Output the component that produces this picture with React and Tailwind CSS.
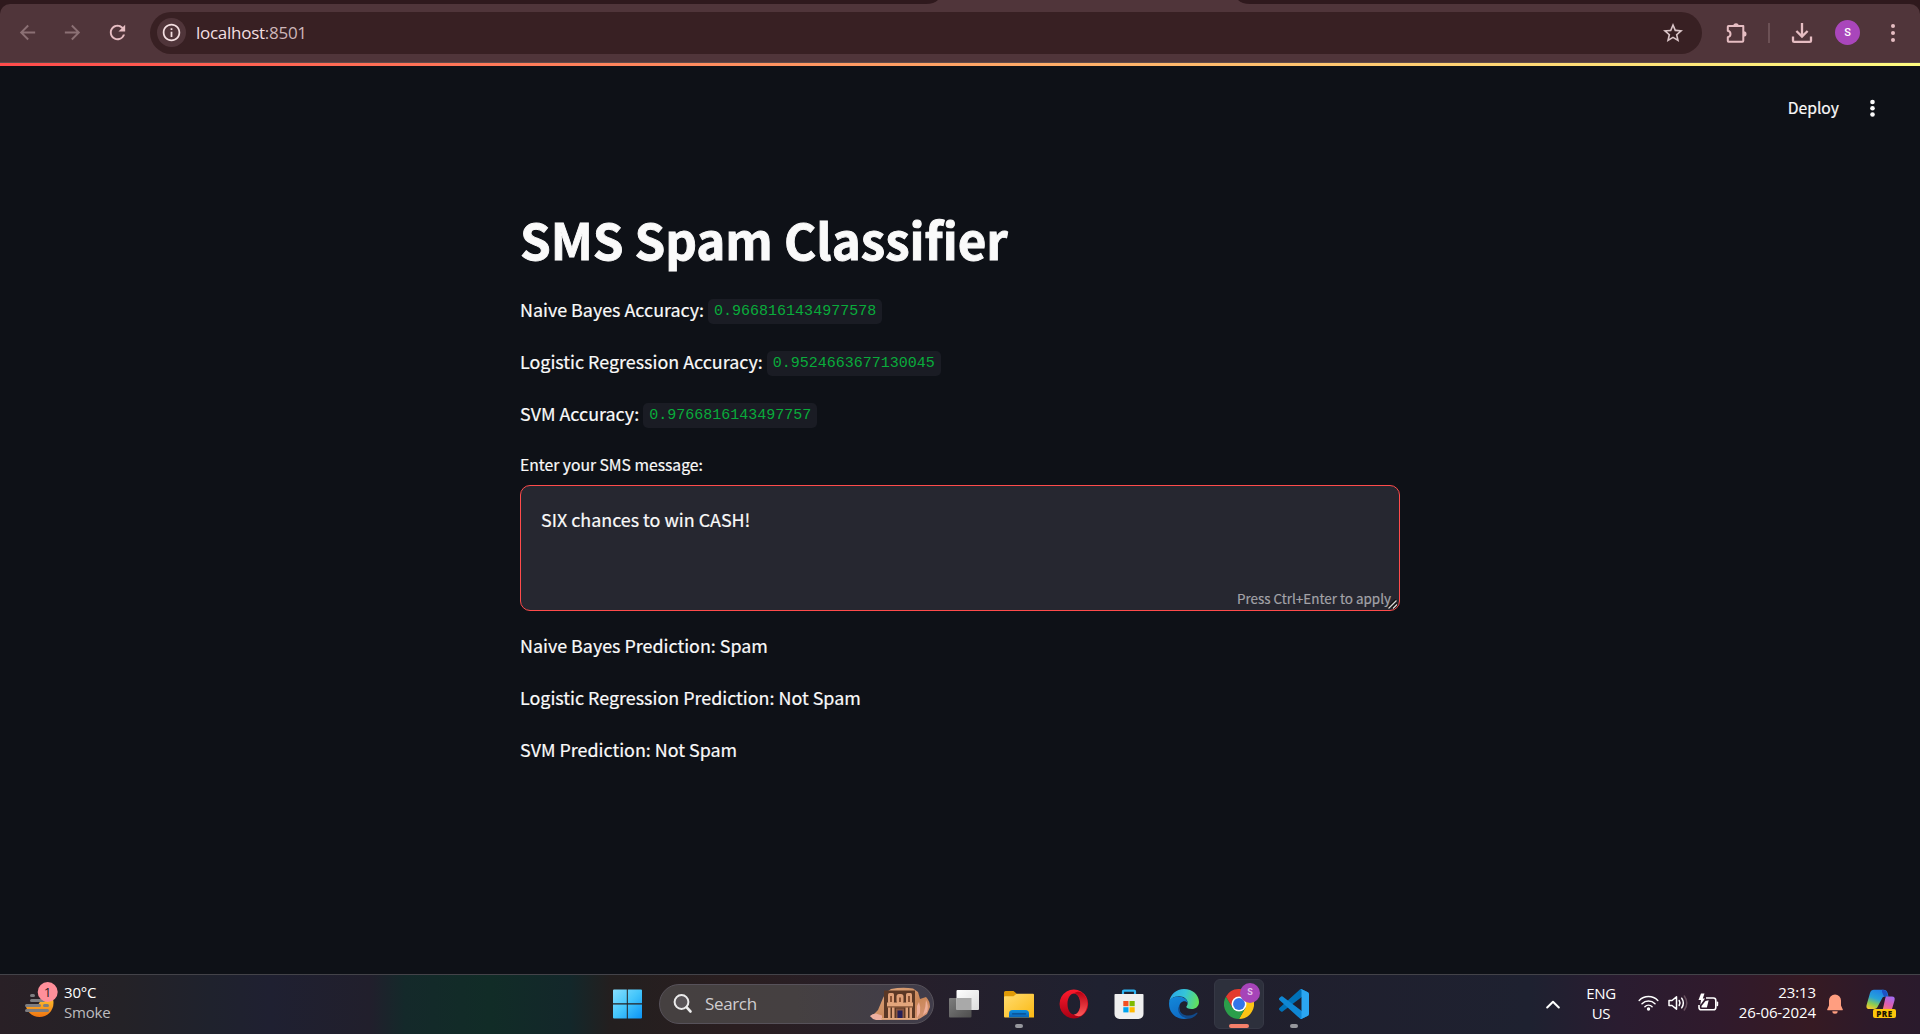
import { MdArrowBack, MdArrowForward, MdRefresh, MdStarBorder, MdInfoOutline } from "react-icons/md";

const accuracies = [
  { label: "Naive Bayes Accuracy:", value: "0.9668161434977578" },
  { label: "Logistic Regression Accuracy:", value: "0.9524663677130045" },
  { label: "SVM Accuracy:", value: "0.9766816143497757" },
];

const predictions = [
  "Naive Bayes Prediction: Spam",
  "Logistic Regression Prediction: Not Spam",
  "SVM Prediction: Not Spam",
];

function ExtensionIcon() {
  return (
    <svg width="22" height="22" viewBox="0 0 22 22" fill="none">
      <path
        d="M2.5 4h14.8v14.8a1 1 0 0 1-1 1H2.5a.7.7 0 0 1-.7-.7v-3.9c1.7-.4 2.7-1.6 2.7-3.2s-1-2.8-2.7-3.2V4.7a.7.7 0 0 1 .7-.7z"
        stroke="#e6bdc2"
        strokeWidth="2"
        strokeLinejoin="round"
      />
      <path d="M7.3 4a2.7 2.7 0 0 1 5.4 0zM17.8 9.2a2.7 2.7 0 0 1 0 5.4z" fill="#e6bdc2" />
    </svg>
  );
}

function DownloadIcon() {
  return (
    <svg width="22" height="22" viewBox="0 0 22 22" fill="none" stroke="#e6bdc2" strokeWidth="2.3">
      <path d="M11 1v13M5.4 9l5.6 5.6L16.6 9" />
      <path d="M2 14.5v4.2a1.2 1.2 0 0 0 1.2 1.2h15.6a1.2 1.2 0 0 0 1.2-1.2v-4.2" />
    </svg>
  );
}

function BrowserBar() {
  return (
    <div>
      <div className="flex h-1 bg-[#2f191d] pl-[926px]">
        <svg className="shrink-0" width="324" height="4" viewBox="0 0 324 4">
          <path d="M12 0Q8 4 0 4H324Q316 4 312 0z" fill="#50353a" />
        </svg>
      </div>
      <div className="bg-[#2f191d]">
        <div className="flex h-[58px] items-center rounded-t-[10px] bg-[#50353a] pb-px">
          <div className="flex w-[150px] shrink-0 items-center gap-[22px] pl-[16px]">
            <MdArrowBack size={23} color="#8b7074" />
            <MdArrowForward size={23} color="#8b7074" />
            <MdRefresh size={23} color="#e6bdc2" />
          </div>
          <div className="flex h-[42px] w-[1552px] shrink-0 items-center rounded-full bg-[#382023] pr-[17px] pl-[7px]">
            <div className="flex h-[29px] w-[29px] items-center justify-center rounded-full bg-[#50353a]">
              <MdInfoOutline size={21} color="#f3dfe1" />
            </div>
            <span className="mt-px ml-[10px] font-['Open_Sans',sans-serif] text-[17px] leading-6 tracking-[-0.27px] text-[#f3dfe1]">
              localhost<span className="text-[#cdb6b9]">:8501</span>
            </span>
            <MdStarBorder size={24} color="#dac5c8" className="mt-px ml-auto" />
          </div>
          <div className="ml-[24px] flex flex-1 items-center">
            <ExtensionIcon />
            <div className="ml-[20px] h-[20px] w-[2px] bg-[#6c5155]" />
            <div className="ml-[21px]">
              <DownloadIcon />
            </div>
            <div className="ml-[22px] flex h-[25px] w-[25px] items-center justify-center rounded-full bg-[#a946bb] pt-px font-[Roboto,sans-serif] text-[11px] font-medium text-white">
              S
            </div>
            <svg className="ml-[30px]" width="6" height="20" viewBox="0 0 6 20" fill="#e6bdc2">
              <circle cx="3" cy="3" r="2" />
              <circle cx="3" cy="10" r="2" />
              <circle cx="3" cy="17" r="2" />
            </svg>
          </div>
        </div>
      </div>
      <div className="h-px bg-[#5c4b4c]" />
    </div>
  );
}

function Page() {
  return (
    <main className="flex-1 bg-[#0e1117] font-['Noto_Sans_CJK_SC',sans-serif] text-[17.9px] text-[#fafafa] [-webkit-text-stroke:0.2px]">
      <div className="h-[3px] bg-[linear-gradient(90deg,#ff4b4b,#fffd80)]" />
      <header className="flex h-[82px] items-center justify-end pt-[2px] pr-[43px]">
        <span className="text-[15.7px] leading-6">Deploy</span>
        <svg className="ml-[30px]" width="8" height="20" viewBox="0 0 8 20" fill="#fafafa">
          <circle cx="3.500" cy="4" r="2.300" />
          <circle cx="3.500" cy="10.300" r="2.300" />
          <circle cx="3.500" cy="16.500" r="2.300" />
        </svg>
      </header>
      <div className="mx-auto flex w-[880px] flex-col pt-[58px]">
        <h1 className="text-[49.3px] leading-[66px] font-bold tracking-[-0.05px] [-webkit-text-stroke:0.9px]">
          SMS Spam Classifier
        </h1>
        <div className="mt-[21px] flex flex-col gap-5">
          {accuracies.map((a) => (
            <p key={a.label} className="flex h-8 items-center gap-[4px] whitespace-nowrap">
              <span className="leading-8">{a.label}</span>
              <code className="mt-[5px] h-[25px] rounded-[5px] bg-[#1a1c24] px-[6px] font-['Liberation_Mono',monospace] text-[15px] leading-[26px] text-[#09ab3b] [-webkit-text-stroke:0px]">
                {a.value}
              </code>
            </p>
          ))}
        </div>
        <label className="mt-[24px] text-[15.7px] leading-6">Enter your SMS message:</label>
        <div className="relative mt-[8px] h-[126px] rounded-[10px] border border-[#ff4b4b] bg-[#262730] px-5 pt-[17px]">
          <p className="leading-8">SIX chances to win CASH!</p>
          <span className="absolute right-[8px] bottom-[2px] text-[13.45px] leading-5 text-[#a3a3a8]">
            Press Ctrl+Enter to apply
          </span>
          <svg className="absolute right-[1px] bottom-[1px]" width="10" height="10" viewBox="0 0 10 10">
            <path d="M0 9.5L8.500 1M4.500 9.500L9 5" stroke="#111" strokeWidth="3.400" />
            <path d="M.5 9.500L8.500 1.500M5 9.500L9 5.500" stroke="#d8d8d8" strokeWidth="1.300" />
          </svg>
        </div>
        <div className="mt-[18px] flex flex-col gap-5">
          {predictions.map((p) => (
            <p key={p} className="leading-8">
              {p}
            </p>
          ))}
        </div>
      </div>
    </main>
  );
}

function WeatherIcon() {
  return (
    <svg className="mb-[9px]" width="36" height="40" viewBox="0 0 36 40">
      <defs>
        <linearGradient id="sun" x1="0" y1="0" x2="0" y2="1">
          <stop offset="0.3" stopColor="#ffc531" />
          <stop offset="1" stopColor="#ef7310" />
        </linearGradient>
        <clipPath id="sunclip">
          <path d="M0 26q10 2 14-1l3-5h14v20H0z" />
        </clipPath>
      </defs>
      <circle cx="15.500" cy="23" r="14" fill="url(#sun)" clipPath="url(#sunclip)" />
      <g stroke="#7d7d80" strokeWidth="3" strokeLinecap="round">
        <path d="M7.500 15.500h2M7.500 20.500h12M2.500 25.500h13M20.500 25.500h3M2.500 30.500h21" />
      </g>
      <circle cx="23.700" cy="12" r="10" fill="#ff8f9a" />
      <text x="23.700" y="17" textAnchor="middle" fontFamily="Open Sans" fontSize="13.500" fill="#2a1a1e">1</text>
    </svg>
  );
}

function WindowsIcon() {
  return (
    <svg width="30" height="30" viewBox="0 0 30 30">
      <defs>
        <linearGradient id="win" x1="0" y1="0" x2="30" y2="30" gradientUnits="userSpaceOnUse">
          <stop offset="0" stopColor="#8be0ff" />
          <stop offset=".5" stopColor="#45c6fb" />
          <stop offset="1" stopColor="#0a93f5" />
        </linearGradient>
      </defs>
      <path d="M2 .5H14.800V14.300H1V1.500a1 1 0 0 1 1-1zM15.800.5h13.200a1 1 0 0 1 1 1V14.300h-14.200zM1 15.500h13.800v14H2a1 1 0 0 1-1-1zM15.800 15.500H30v13a1 1 0 0 1-1 1H15.800z" fill="url(#win)" />
    </svg>
  );
}

function PetraIcon() {
  return (
    <svg width="60" height="34" viewBox="0 0 60 34">
      <defs>
        <linearGradient id="rock" x1="0" y1="0" x2="1" y2="1">
          <stop offset="0" stopColor="#e2ab83" />
          <stop offset=".6" stopColor="#c98658" />
          <stop offset="1" stopColor="#d9987a" />
        </linearGradient>
      </defs>
      <path d="M3 28L8 23L13 11L16 5.500L21 2Q32 0 43 1.500L48 5L50 12L56 10Q60 14 60 20L57 27L50 31.500L46 32.500H11z" fill="url(#rock)" />
      <path d="M0 29Q2 26.500 6 26.500L12 28.500V33H6Q2 32 0 29z" fill="#eeb0a0" />
      <rect x="14" y="3.500" width="31" height="28" fill="#5b3825" />
      <rect x="18" y="6" width="6" height="10.500" rx="1.500" fill="#dfa078" />
      <rect x="36" y="6" width="6" height="10.500" rx="1.500" fill="#dfa078" />
      <rect x="26.500" y="7" width="7" height="9.500" rx="2.500" fill="#dfa078" />
      <path d="M20 9h2v6h-2zM38 9h2v6h-2zM29 10.500h2V15h-2z" fill="#8a5233" />
      <path d="M17 15.500h26v4H17z" fill="#e3a67c" />
      <path d="M17 19.500h26v1H17z" fill="#9c6443" />
      <path d="M18 20.500h2.500V31H18zM22 20.500h2.500V31H22zM35.500 20.500H38V31h-2.500zM39.500 20.500H42V31h-2.500z" fill="#e0a17a" />
      <rect x="26" y="21.500" width="8" height="10" fill="#8a563e" />
      <rect x="27.500" y="23.500" width="5" height="8" fill="#262058" />
      <rect x="11" y="31" width="37" height="1.800" fill="#e5aa80" />
      <path d="M49 15Q51 20 50 26L47 31V19zM56 13Q59 19 57 25L53 28Q56 20 56 13z" fill="#eeae98" />
    </svg>
  );
}

function TaskViewIcon() {
  return (
    <svg width="30" height="30" viewBox="0 0 30 30">
      <defs>
        <linearGradient id="tva" x1="0" y1="0" x2="1" y2="1">
          <stop offset="0" stopColor="#fff" />
          <stop offset="1" stopColor="#dcdcdc" />
        </linearGradient>
        <linearGradient id="tvb" x1="0" y1="0" x2="1" y2="1">
          <stop offset="0" stopColor="#7d7d7d" />
          <stop offset="1" stopColor="#4d4d4d" />
        </linearGradient>
      </defs>
      <rect x="0" y="9" width="22.500" height="19.500" rx="1" fill="url(#tvb)" />
      <rect x="7.500" y="1" width="22.500" height="20" rx="1" fill="url(#tva)" />
      <path d="M7.500 9h15v12h-15z" fill="#a9a9a9" />
    </svg>
  );
}

function FolderIcon() {
  return (
    <svg width="30" height="30" viewBox="0 0 30 30">
      <defs>
        <linearGradient id="fold" x1="0" y1="0" x2="1" y2="1">
          <stop offset="0" stopColor="#ffdc70" />
          <stop offset="1" stopColor="#fbb913" />
        </linearGradient>
        <linearGradient id="foldb" x1="0" y1="0" x2="0" y2="1">
          <stop offset="0" stopColor="#0f8fdf" />
          <stop offset="1" stopColor="#0b62b5" />
        </linearGradient>
      </defs>
      <path d="M0 3.500A1.500 1.500 0 0 1 1.500 2H9.500l3 2.600V9H0z" fill="#df9a06" />
      <path d="M0 8q0-.6 1-.7H9.500L12.500 4.700H29a1 1 0 0 1 1 1V28.500H1a1 1 0 0 1-1-1z" fill="url(#fold)" />
      <path d="M5 28.500V24.500a3.500 3.500 0 0 1 3.500-3.500h13a3.500 3.500 0 0 1 3.500 3.500v4z" fill="url(#foldb)" />
      <path d="M8.500 24.800h13" stroke="#0a4b8c" strokeWidth="1.200" strokeLinecap="round" />
    </svg>
  );
}

function OperaIcon() {
  return (
    <svg width="30" height="30" viewBox="0 0 30 30">
      <defs>
        <linearGradient id="opa" x1="0" y1="0" x2="0" y2="1">
          <stop offset="0" stopColor="#ff1b2d" />
          <stop offset="1" stopColor="#a70014" />
        </linearGradient>
        <linearGradient id="opb" x1="0" y1="0" x2="0" y2="1">
          <stop offset="0" stopColor="#b80012" />
          <stop offset="1" stopColor="#ff5a5a" />
        </linearGradient>
      </defs>
      <path fillRule="evenodd" d="M14.800.5a14.300 14.500 0 1 0 .1 0zM15 4.500c3.600 0 6.300 4.600 6.300 10.500S18.600 25.500 15 25.500 8.500 20.900 8.500 15 11.400 4.500 15 4.500z" fill="url(#opa)" />
      <path d="M15 4.500c2-1.700 5-2.300 8-.8a14.300 14.500 0 0 1 0 22.600c-3 1.500-6 .9-8-.8 3.600 0 6.300-4.600 6.300-10.500S18.600 4.500 15 4.500z" fill="url(#opb)" />
    </svg>
  );
}

function StoreIcon() {
  return (
    <svg width="30" height="30" viewBox="0 0 30 30">
      <path d="M9 6V2.600A1 1 0 0 1 10 1.600H20a1 1 0 0 1 1 1V6" fill="none" stroke="#2fb5f4" strokeWidth="2.200" />
      <path d="M.5 5.800a.8.800 0 0 1 .8-.8h27.400a.8.800 0 0 1 .8.800V25a5 5 0 0 1-5 5h-19a5 5 0 0 1-5-5z" fill="#efefef" />
      <path d="M9.300 12h5.200v5.200H9.300z" fill="#f25022" />
      <path d="M15.500 12h5.200v5.200h-5.200z" fill="#7fba00" />
      <path d="M9.300 18.200h5.200v5.200H9.300z" fill="#00a4ef" />
      <path d="M15.500 18.200h5.200v5.200h-5.200z" fill="#ffb900" />
    </svg>
  );
}

function EdgeIcon() {
  return (
    <svg width="30" height="30" viewBox="0 0 24 24">
      <defs>
        <linearGradient id="eda" x1="0" y1=".3" x2="1" y2=".5">
          <stop offset="0" stopColor="#2aa7e8" />
          <stop offset=".5" stopColor="#35c4d8" />
          <stop offset="1" stopColor="#62e05b" />
        </linearGradient>
        <linearGradient id="edb" x1="0" y1="0" x2=".4" y2="1">
          <stop offset="0" stopColor="#1389da" />
          <stop offset="1" stopColor="#0f6cc4" />
        </linearGradient>
      </defs>
      <path d="M.1 10.700C.8 4.600 5.800 0 12 0c6.800 0 12 4.800 12 10.300 0 3.400-2.600 5.700-5.900 5.700-2.900 0-4.300-1-4.300-1.800 0-.5 1.100-1 1.100-3.100 0-3-3-5.300-7-5.300-4.200 0-7 2.300-7.800 4.900z" fill="url(#eda)" />
      <path d="M.1 10.700C.6 7.800 3.600 6 7.300 6c4.100 0 7.500 2.300 7.600 5.200-2-2.700-6.700-1.300-6.700 3.600 0 4.500 3.500 8.200 7.400 8.600-1 .4-2.300.6-3.600.6C5.400 24-.6 18.500.1 10.700z" fill="url(#edb)" />
      <path d="M8.300 13.300c-.9 5.200 3.200 8 7.300 7.900 3.100 0 5.200-1.600 6.500-2.300.5-.3.900.1.600.6-1.700 2.500-4.300 4.100-7.100 4.200-4.200-.2-8.700-3.800-8.200-8.200.1-.9.400-1.600.9-2.200z" fill="#114a8b" />
    </svg>
  );
}

function ChromeIcon() {
  return (
    <svg width="30" height="30" viewBox="0 0 48 48">
      <path d="M24 12h20.800A24 24 0 0 1 24 48l10.400-18z" fill="#fcc414" />
      <path d="M3.200 12L13.600 30 24 36l10.400-6L24 48A24 24 0 0 1 3.200 12z" fill="#2b9e4a" />
      <path d="M3.200 12A24 24 0 0 1 44.800 12H24L13.600 30z" fill="#e33b2e" />
      <circle cx="24" cy="24" r="12" fill="#fff" />
      <circle cx="24" cy="24" r="9.500" fill="#3275ea" />
    </svg>
  );
}

function VSCodeIcon() {
  return (
    <svg width="30" height="30" viewBox="0 0 100 100">
      <path d="M96.500 10.800L75.900.9a6.200 6.200 0 0 0-7.100 1.200L1.300 63.600a4.200 4.200 0 0 0 0 6.200l5.500 5a4.200 4.200 0 0 0 5.300.2L93.400 13.400c2.700-2.100 6.600-.1 6.600 3.300v-.3a6.200 6.200 0 0 0-3.500-5.600z" fill="#0071b8" />
      <path d="M96.500 89.200l-20.600 9.900a6.200 6.200 0 0 1-7.100-1.200L1.300 36.400a4.200 4.200 0 0 1 0-6.200l5.500-5a4.200 4.200 0 0 1 5.300-.2l81.300 61.600c2.700 2.100 6.600.1 6.600-3.300v.3a6.200 6.200 0 0 1-3.500 5.600z" fill="#0f87d4" />
      <path d="M75.900 99.100a6.200 6.200 0 0 1-7.100-1.200c2.300 2.300 6.200.7 6.200-2.600V4.700c0-3.300-3.900-4.900-6.200-2.600A6.200 6.200 0 0 1 75.900.9l20.600 9.900a6.200 6.200 0 0 1 3.500 5.600v67.200a6.200 6.200 0 0 1-3.500 5.600z" fill="#2ba6f1" />
    </svg>
  );
}

const apps = [
  { name: "task-view", Icon: TaskViewIcon },
  { name: "explorer", Icon: FolderIcon, running: true },
  { name: "opera", Icon: OperaIcon },
  { name: "store", Icon: StoreIcon },
  { name: "edge", Icon: EdgeIcon },
  { name: "chrome", Icon: ChromeIcon, active: true },
  { name: "vscode", Icon: VSCodeIcon, running: true },
];

function AppButton({ Icon, running, active }) {
  return (
    <div
      className={
        active
          ? "relative flex h-[50px] w-[50px] items-center justify-center rounded-[6px] border border-[#363845] bg-[#2d303c]"
          : "relative flex h-[50px] w-[50px] items-center justify-center"
      }
    >
      <Icon />
      {running && <span className="absolute bottom-[1px] left-[21px] h-1 w-2 rounded-full bg-[#96979d]" />}
      {active && (
        <>
          <span className="absolute bottom-0 left-[14px] h-1 w-5 rounded-full bg-[#f4806a]" />
          <span className="absolute top-[3px] left-[25px] flex h-5 w-5 items-center justify-center rounded-full bg-[#a644b8] font-[Roboto,sans-serif] text-[9px] font-bold text-[#e3c3ea]">
            S
          </span>
        </>
      )}
    </div>
  );
}

function TrayIcons() {
  return (
    <div className="mb-[2px] flex items-center">
      <svg width="21" height="18" viewBox="0 0 21 18" fill="none" stroke="#fff" strokeWidth="1.500" strokeLinecap="round">
        <path d="M1.200 6.500a13 13 0 0 1 18.600 0M4 9.800a9.200 9.200 0 0 1 13 0M6.900 12.700a5.200 5.200 0 0 1 7.200 0" />
        <circle cx="10.500" cy="15" r="1.700" fill="#fff" stroke="none" />
      </svg>
      <svg className="ml-[9px]" width="21" height="18" viewBox="0 0 21 18" fill="none" stroke="#fff" strokeWidth="1.500" strokeLinecap="round" strokeLinejoin="round">
        <path d="M1 6.500h3L8.500 2.800v12.400L4 11.500H1z" />
        <path d="M11.200 6.500q1.600 2.500 0 5M13.700 4.200q3.300 4.800 0 9.600" />
        <path d="M16.300 2q5 7 0 14" stroke="#67505e" />
      </svg>
      <svg className="ml-[8px]" width="22" height="20" viewBox="0 0 22 20" fill="none">
        <path d="M9 5h7.500A2.300 2.300 0 0 1 18.800 7.300v7.200A2.300 2.300 0 0 1 16.500 16.800H4.300A2.300 2.300 0 0 1 2 14.500V12" stroke="#fff" strokeWidth="1.600" />
        <path d="M19.500 8.500h.7a1 1 0 0 1 1 1v2.800a1 1 0 0 1-1 1h-.7z" fill="#fff" />
        <path d="M4.500 14.500v-1.500L8.500 8l3.200-.800-1.800 7.300z" fill="#fff" />
        <path d="M4 .5L1.500 7H4l-.7 5L8 5.500H5.800L7.500.5z" fill="#fff" />
      </svg>
    </div>
  );
}

function CopilotIcon() {
  return (
    <div className="relative h-[30px] w-[30px]">
      <svg width="30" height="24" viewBox="0 0 30 24">
        <defs>
          <linearGradient id="cpa" x1=".6" y1="0" x2=".2" y2="1">
            <stop offset="0" stopColor="#1f7fe8" />
            <stop offset=".45" stopColor="#27a3d8" />
            <stop offset=".75" stopColor="#8ccb52" />
            <stop offset="1" stopColor="#f2c82c" />
          </linearGradient>
          <linearGradient id="cpb" x1=".7" y1="0" x2=".3" y2="1">
            <stop offset="0" stopColor="#a56bf0" />
            <stop offset=".5" stopColor="#e05fae" />
            <stop offset="1" stopColor="#fb8a5c" />
          </linearGradient>
        </defs>
        <path d="M8 .8h9.500q3 0 4 3l1 3.700h-4q-2 0-3 3L12 17q-1 3-4 3H3.500Q-.3 20 .6 16L4 4Q5 .8 8 .8z" fill="url(#cpa)" />
        <path d="M16 .8q4 0 5 3.200l1 3.500h-4L16 3z" fill="#1d52c4" />
        <path d="M20 7.500h6q3.500 0 2.500 4L26 20q-1 3.500-4 3.500h-8q2-1 3-4l2-9q.3-2 1-3z" fill="url(#cpb)" />
      </svg>
      <div className="absolute right-0 bottom-[1px] flex h-[9px] w-[23px] items-center justify-center rounded-[2px] bg-[#fdc60b] font-['Open_Sans',sans-serif] text-[8px] leading-none font-extrabold tracking-[0.6px] text-[#1c1400]">
        PRE
      </div>
    </div>
  );
}

function Taskbar() {
  return (
    <footer className="flex h-[60px] shrink-0 items-center border-t border-[#434349] bg-[linear-gradient(90deg,#292026_0px,#242227_122px,#1f222d_210px,#1f2031_270px,#211f2c_370px,#14292a_405px,#112c27_490px,#13272a_570px,#231f1f_610px,#2a1e20_735px,#261f2b_918px,#1f2130_1100px,#201f2d_1224px,#1e2130_1530px,#2a1c30_1620px,#301a2c_1720px,#361a23_1812px,#2d1a2a_1870px,#2a1a2c_1920px)] pb-px font-['Open_Sans',sans-serif] text-white">
      <div className="flex w-[602px] shrink-0 items-center pl-[24px]">
        <WeatherIcon />
        <div className="mb-[4px] ml-[4px] text-[15px] leading-5 tracking-[-0.2px]">
          <p>30°C</p>
          <p className="text-[#bdbcbf]">Smoke</p>
        </div>
      </div>
      <div className="flex h-[50px] w-[50px] shrink-0 items-center justify-center">
        <WindowsIcon />
      </div>
      <div className="ml-[7px] flex h-10 w-[275px] shrink-0 items-center rounded-full border border-[#57525a] bg-[linear-gradient(90deg,#454040,#454041_50%,#403c4a)] pr-[3px] pl-[13px]">
        <svg width="20" height="20" viewBox="0 0 20 20" fill="none" stroke="#ececec" strokeWidth="2">
          <circle cx="8.500" cy="8" r="6.900" fill="#5a5558" />
          <path d="M13.500 13.200l4 4.300" strokeWidth="2.600" strokeLinecap="round" />
        </svg>
        <span className="mb-px ml-[12px] text-[17px] leading-6 tracking-[-0.35px] text-[#d0cdd0]">Search</span>
        <div className="ml-auto">
          <PetraIcon />
        </div>
      </div>
      <div className="ml-[5px] flex shrink-0 gap-[5px]">
        {apps.map((a) => (
          <AppButton key={a.name} Icon={a.Icon} running={a.running} active={a.active} />
        ))}
      </div>
      <div className="ml-[227px] flex flex-1 items-center">
        <svg width="14" height="9" viewBox="0 0 14 9" fill="none" stroke="#fff" strokeWidth="2" strokeLinecap="round" strokeLinejoin="round">
          <path d="M1.200 7.500L7 1.700l5.800 5.800" />
        </svg>
        <div className="mb-[3px] ml-[26px] w-[30px] text-center text-[15px] leading-5 tracking-[-0.3px]">
          <p>ENG</p>
          <p>US</p>
        </div>
        <div className="ml-[22px]">
          <TrayIcons />
        </div>
        <div className="mb-[4px] ml-auto text-right text-[15px] leading-5 tracking-[-0.1px]">
          <p>23:13</p>
          <p>26-06-2024</p>
        </div>
        <svg className="mr-[23px] ml-[11px]" width="16" height="20" viewBox="0 0 16 20" fill="#ff9e80">
          <path d="M8 .5a6 6 0 0 1 6 6v5l1.800 4a.5.500 0 0 1-.5.700H.7a.5.500 0 0 1-.5-.7l1.800-4v-5a6 6 0 0 1 6-6zM5.300 17.200h5.400a2.700 2.500 0 0 1-5.400 0z" />
        </svg>
        <div className="mr-[24px]">
          <CopilotIcon />
        </div>
      </div>
    </footer>
  );
}

export default function App() {
  return (
    <div className="flex h-[1034px] w-[1920px] flex-col overflow-hidden">
      <BrowserBar />
      <Page />
      <Taskbar />
    </div>
  );
}
